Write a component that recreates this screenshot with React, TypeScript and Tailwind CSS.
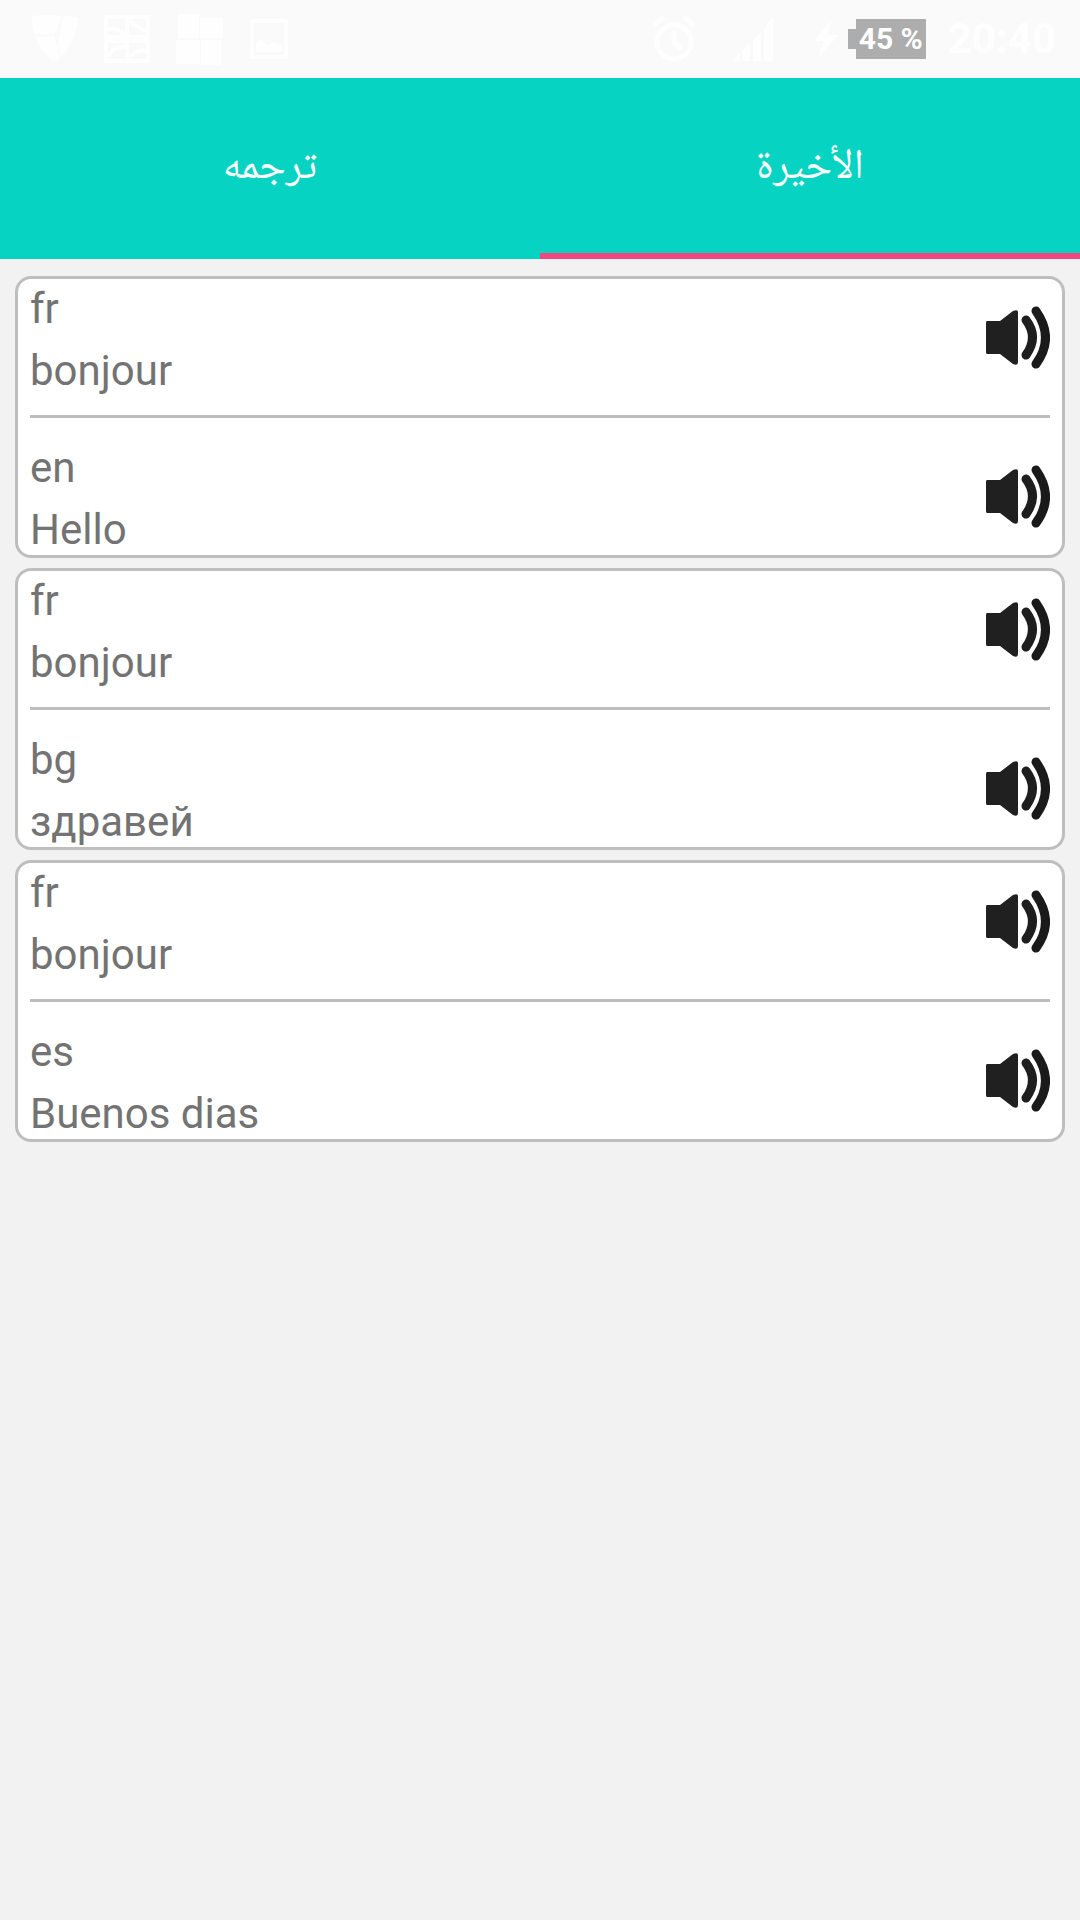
import React from 'react';

type Entry = { lang: string; text: string };

const history: { from: Entry; to: Entry }[] = [
  { from: { lang: 'fr', text: 'bonjour' }, to: { lang: 'en', text: 'Hello' } },
  { from: { lang: 'fr', text: 'bonjour' }, to: { lang: 'bg', text: 'здравей' } },
  { from: { lang: 'fr', text: 'bonjour' }, to: { lang: 'es', text: 'Buenos dias' } },
];

const SpeakerIcon = () => (
  <svg width="64" height="63" viewBox="0 0 64 63" fill="none" aria-hidden="true">
    <path d="M1 15h13L27 5q5-2 5 1v50q0 4-5 2L14 48H1q-1 0-1-2V17q0-2 1-2z" fill="#202020" />
    <path d="M40 14q13 17 0 35" stroke="#1e1e1e" strokeWidth="9" strokeLinecap="round" />
    <path d="M50 5q19 27 0 53" stroke="#1a1a1a" strokeWidth="9" strokeLinecap="round" />
  </svg>
);

const StatusBar = () => (
  <header className="flex h-[78px] items-center justify-between bg-[#fafafa] pl-8 pr-6 text-[#fefefe]">
    <div className="flex items-center gap-[26px]">
      {/* shield */}
      <svg width="46" height="48" viewBox="0 0 46 48" fill="currentColor" aria-hidden="true">
        <path d="M0 1q14-2 29 0L24 18Q12 21 2 19Q0 10 0 1zM31 1l15 1q-1 24-17 40l-3-12q0-4 2-10zM3 21q10 2 19-1l4 14 2 9-6 4Q9 38 3 21z" />
      </svg>
      {/* image grid */}
      <svg width="46" height="48" viewBox="0 0 46 48" fill="none" stroke="currentColor" strokeWidth="4" aria-hidden="true">
        <path d="M2 2h42v20H2zM2 26h42v20H2zM23 2v44" />
        <path d="M3 16q8-6 18 4M26 6q8 8 17 9M4 42q6-12 17-10M26 42q9-10 17-5" />
      </svg>
      {/* tiles */}
      <svg width="48" height="54" viewBox="0 0 48 54" fill="currentColor" aria-hidden="true">
        <path d="M2 2h21v24H2zM24 6h23v20H24zM0 28h24v24H0zM25 28h20v25H25z" />
      </svg>
      {/* picture */}
      <svg width="38" height="40" viewBox="0 0 38 40" fill="currentColor" aria-hidden="true">
        <path d="M0 0h38v40H0zM4 4v32h30V4z" fillRule="evenodd" />
        <path d="M6 33V24l5-4 6 6 6-3 9 3v7z" />
      </svg>
    </div>
    <div className="flex items-center">
      {/* alarm */}
      <svg width="44" height="48" viewBox="0 0 44 48" fill="none" stroke="currentColor" strokeWidth="5" aria-hidden="true">
        <circle cx="22" cy="27" r="17" />
        <path d="M22 16v12l8 6M2 10l10-8M42 10L32 2" />
      </svg>
      {/* signal */}
      <svg className="ml-9" width="42" height="46" viewBox="0 0 42 46" fill="currentColor" aria-hidden="true">
        <path d="M0 45l8-8v8zM10 35l8-8v18h-8zM21 24l8-8v29h-8zM32 12l9-11v44h-9z" />
      </svg>
      {/* charging */}
      <svg className="ml-10" width="26" height="38" viewBox="0 0 26 38" fill="currentColor" aria-hidden="true">
        <path d="M17 0L0 21h10L4 38 25 15H14z" />
      </svg>
      <div className="ml-2 flex items-center">
        <span className="h-5 w-2 bg-[#adadad]" />
        <span className="flex h-10 w-[70px] items-center justify-center whitespace-nowrap bg-[#adadad] text-[30px] font-bold leading-none text-white">
          45 %
        </span>
      </div>
      <time className="ml-[22px] text-[42px] font-bold leading-none">20:40</time>
    </div>
  </header>
);

const tabs = [
  { label: 'ترجمه', active: false },
  { label: 'الأخيرة', active: true },
];

const EntryRow = ({ entry }: { entry: Entry }) => (
  <div className="flex items-start justify-between">
    <div className="flex flex-col gap-[14px]">
      <p>{entry.lang}</p>
      <p>{entry.text}</p>
    </div>
    <button type="button" className="mt-[21px]" aria-label={`Listen: ${entry.text}`}>
      <SpeakerIcon />
    </button>
  </div>
);

export default function App() {
  return (
    <div className="min-h-screen bg-[#f2f2f2] font-['Roboto','Noto_Sans',sans-serif]">
      <StatusBar />

      <nav role="tablist" className="grid h-[181px] grid-cols-2 bg-[#06d3c2]">
        {tabs.map((tab) => (
          <button
            key={tab.label}
            type="button"
            role="tab"
            aria-selected={tab.active}
            lang="ar"
            dir="rtl"
            className={`border-b-6 pt-2 text-[42px] text-white font-['Noto_Naskh_Arabic','Noto_Sans_Arabic','DejaVu_Sans',sans-serif] ${
              tab.active ? 'border-[#f3457f]' : 'border-transparent'
            }`}
          >
            {tab.label}
          </button>
        ))}
      </nav>

      <main className="px-[15px] pt-[17px]">
        <ul className="flex flex-col gap-[10px]">
          {history.map(({ from, to }) => (
            <li
              key={to.lang}
              className="rounded-2xl border-3 border-[#bebebe] bg-white px-3 pt-[6px] pb-px text-[42px] leading-[48px] text-[#737373]"
            >
              <EntryRow entry={from} />
              <hr className="mt-5 mb-[26px] border-t-3 border-[#bebebe]" />
              <EntryRow entry={to} />
            </li>
          ))}
        </ul>
      </main>
    </div>
  );
}
